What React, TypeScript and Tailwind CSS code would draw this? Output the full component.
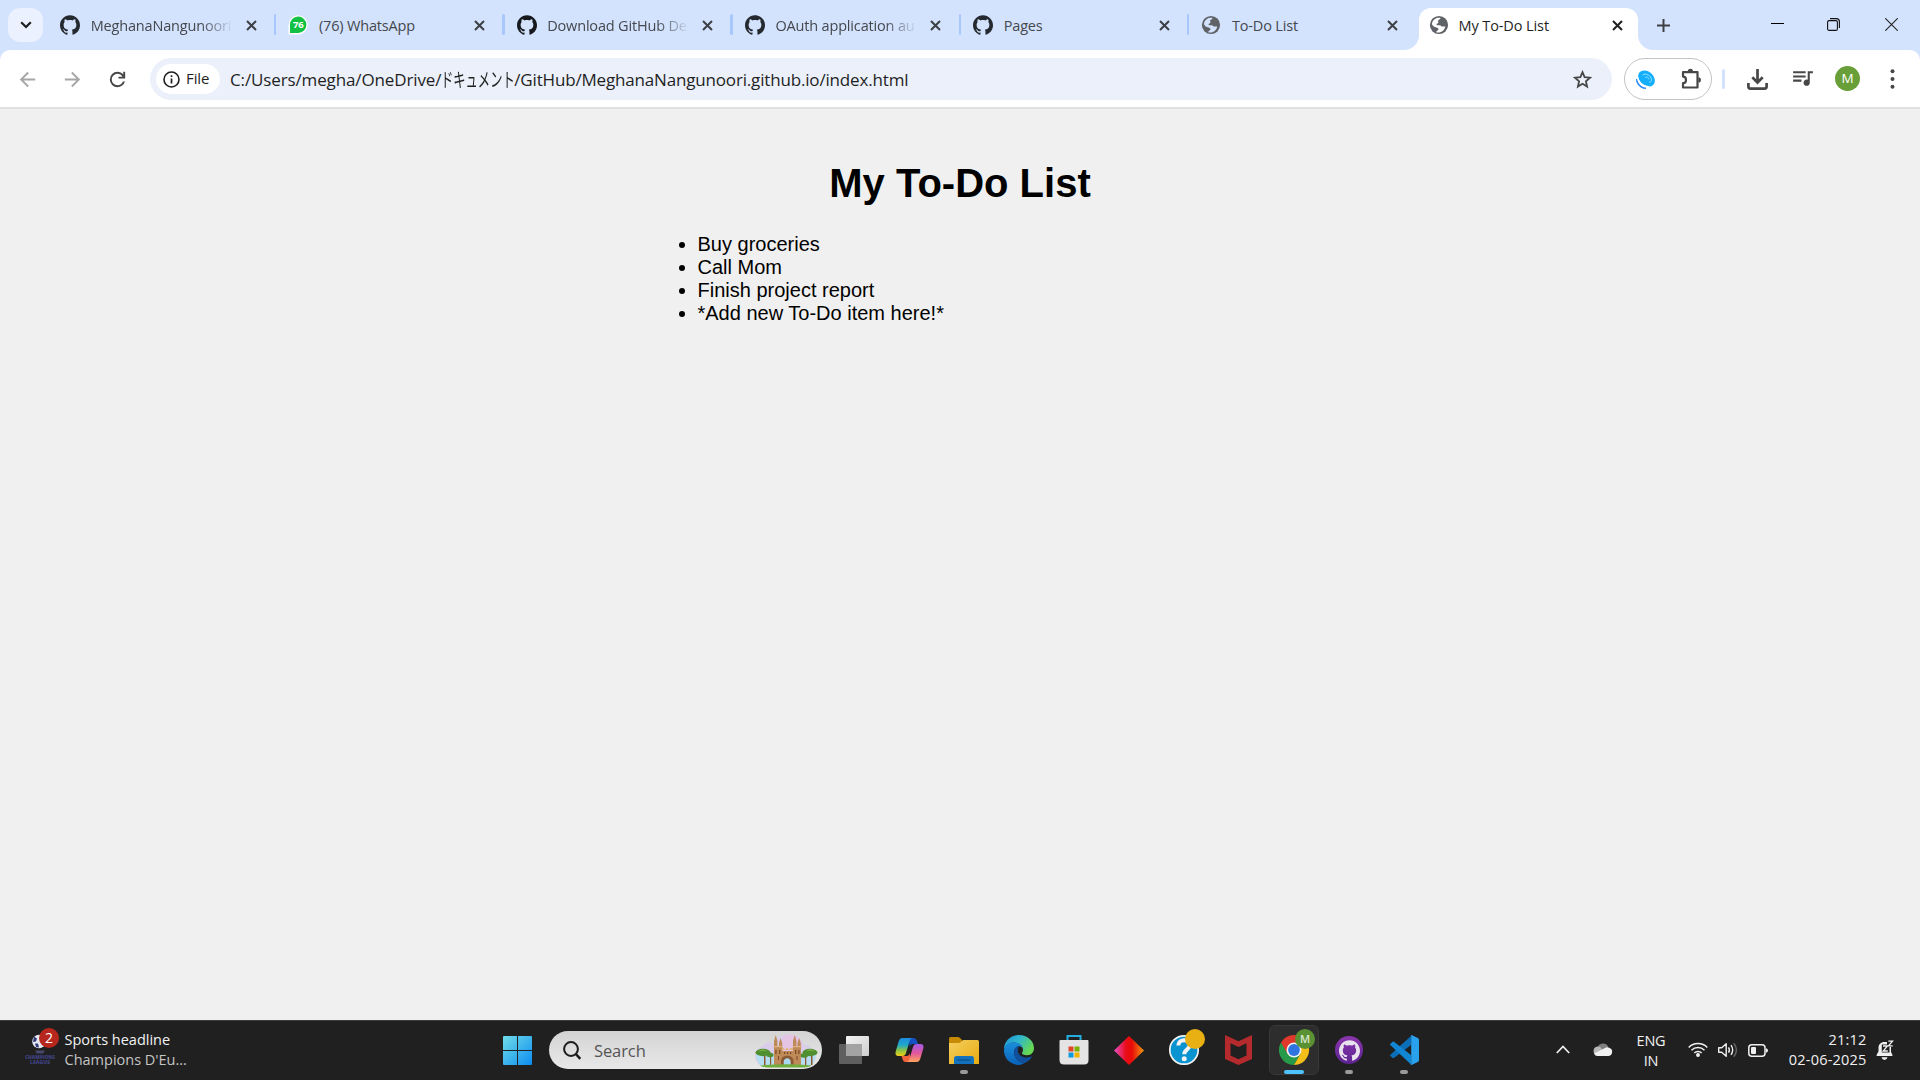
import type { ReactNode } from "react";
import { SiGithub } from "react-icons/si";
import { MdArrowBack, MdArrowForward, MdQueueMusic } from "react-icons/md";

function Globe() {
  return (
    <svg width="20" height="20" viewBox="0 0 20 20">
      <circle cx="10" cy="10" r="9.100" fill="#5f6368" />
      <path
        d="M2.900 9.200c.3-3.300 2.800-5.900 6.100-6.400 1.200-.1 2 .1 2.600.4-.5 1.300-2.100 1.200-2.500 2.300-.3 1 .6 1.300.3 2.200-.4.9-1.700.7-1.900 1.600-.1.800.9 1 2 1 1.500-.1 2.600.4 3.100 1.300h3.600c-.3 2.900-2.700 5.400-5.600 5.900-1.300.2-2.300.1-3.300-.2.100-1.200.8-1.700 1.600-2.100.9-.5.6-1.500-.2-2.100-1.400-1-3.900-.500-5.800-3.900z"
        fill="currentColor"
      />
    </svg>
  );
}

function WhatsApp() {
  return (
    <svg width="20" height="20" viewBox="0 0 20 20">
      <path d="M0.500 19.500V10A9.600 9.600 0 1 1 10.200 19.500z" fill="#fff" />
      <path d="M2 18V10A8.200 8.200 0 1 1 10.200 18z" fill="#12c143" />
      <text x="10.200" y="13.400" textAnchor="middle" fontFamily="Open Sans, sans-serif" fontWeight="700" fontSize="9.500" fill="#fff">
        76
      </text>
    </svg>
  );
}

function Cross({ color }: { color: string }) {
  return (
    <svg width="11" height="11" viewBox="0 0 11 11" fill="none" stroke={color} strokeWidth="2">
      <path d="M1 1l9 9M10 1l-9 9" />
    </svg>
  );
}

const tabs: { title: string; icon: ReactNode; fade?: boolean }[] = [
  { title: "MeghanaNangunoori", icon: <SiGithub size={20} color="#24292f" />, fade: true },
  { title: "(76) WhatsApp", icon: <WhatsApp /> },
  { title: "Download GitHub De", icon: <SiGithub size={20} color="#16181c" />, fade: true },
  { title: "OAuth application au", icon: <SiGithub size={20} color="#24292f" />, fade: true },
  { title: "Pages", icon: <SiGithub size={20} color="#24292f" /> },
  { title: "To-Do List", icon: <Globe /> },
];

function TabStrip() {
  return (
    <div className="flex h-[50px] shrink-0 bg-[#d3e2fd] text-[14.5px] tracking-[-0.17px]">
      <div className="ml-2 mt-2 flex h-[34px] w-[35px] shrink-0 items-center justify-center rounded-xl bg-[#ebf1fe]">
        <svg width="12" height="8" viewBox="0 0 12 8" fill="none" stroke="#1f1f1f" strokeWidth="2.200">
          <path d="M1.200 1.200L6 6l4.800-4.800" />
        </svg>
      </div>
      <div className="ml-[5.200px] flex shrink-0">
        {tabs.map((t, i) => (
          <div key={t.title} className="relative flex h-[50px] w-[228.25px] items-center pl-3 text-[#d3e2fd]">
            {t.icon}
            <span
              className={
                t.fade
                  ? "ml-[10.5px] w-[141px] whitespace-nowrap pt-0.5 text-[#45484d] [mask-image:linear-gradient(to_right,black_78%,transparent_101%)]"
                  : "ml-[10.5px] w-[141px] whitespace-nowrap pt-0.5 text-[#45484d]"
              }
            >
              {t.title}
            </span>
            <span className="ml-[14px]">
              <Cross color="#3c4043" />
            </span>
            {i < 5 && <i className="absolute right-0 top-[14px] h-[21px] w-[2.5px] rounded-full bg-[#a8c7fa]" />}
          </div>
        ))}
      </div>
      <div className="relative ml-[1.300px] mt-2 flex h-[42px] w-[219px] shrink-0 items-center rounded-t-xl bg-white pb-2 pl-[10px] text-white">
        <i className="absolute -left-[15px] bottom-0 size-[15px] bg-[radial-gradient(circle_at_0_0,transparent_14.5px,white_15.5px)]" />
        <i className="absolute -right-[15px] bottom-0 size-[15px] bg-[radial-gradient(circle_at_100%_0,transparent_14.5px,white_15.5px)]" />
        <Globe />
        <span className="ml-[9.5px] w-[141px] whitespace-nowrap pt-0.5 tracking-[-0.1px] text-[#1f1f1f]">My To-Do List</span>
        <span className="ml-[13px]">
          <Cross color="#1f1f1f" />
        </span>
      </div>
      <svg className="ml-[19px] mt-[19px] shrink-0" width="13" height="13" viewBox="0 0 13 13" stroke="#3c4043" strokeWidth="2">
        <path d="M6.500 0v13M0 6.500h13" />
      </svg>
      <div className="ml-auto mr-[22px] mt-[18px] flex shrink-0">
        <svg width="13" height="13" viewBox="0 0 13 13" stroke="#000" shapeRendering="crispEdges">
          <path d="M0 5.500h13" />
        </svg>
        <svg className="ml-[43px] mr-[45px]" width="13" height="13" viewBox="0 0 13 13" fill="none" stroke="#111" strokeWidth="1.100">
          <rect x=".6" y="2.600" width="9.800" height="9.800" rx="1.500" />
          <path d="M3 .6h6.400a3 3 0 0 1 3 3V10" />
        </svg>
        <svg width="13" height="13" viewBox="0 0 13 13" stroke="#222" strokeWidth="1.100">
          <path d="M.3.3l12.400 12.400M12.700.3L.3 12.700" />
        </svg>
      </div>
    </div>
  );
}

function Toolbar() {
  return (
    <div className="h-[59px] shrink-0 bg-[#d3e2fd]">
      <div className="flex h-full items-center rounded-t-[10px] border-b-2 border-[#e0e0e0] bg-white pt-px">
        <MdArrowBack size={23} color="#a6a6a6" className="ml-4 shrink-0" />
        <MdArrowForward size={23} color="#a6a6a6" className="ml-[22px] shrink-0" />
        <svg className="ml-[22px] shrink-0" width="23" height="23" viewBox="0 0 24 24" fill="#474747">
          <path d="M12 20q-3.350 0-5.675-2.325T4 12q0-3.350 2.325-5.675T12 4q1.725 0 3.300.712T18 6.750V4h2v7h-7V9h4.200q-.8-1.400-2.187-2.200T12 6Q9.500 6 7.750 7.750T6 12q0 2.500 1.750 4.250T12 18q1.925 0 3.475-1.100T17.650 14h2.100q-.7 2.650-2.850 4.325T12 20Z" />
        </svg>
        <div className="ml-[21px] flex h-[42px] w-[1462px] shrink-0 items-center rounded-full bg-[#ebf0fa] pl-1.5">
          <div className="flex h-[30px] w-16 shrink-0 items-center rounded-full bg-white pl-[7px]">
            <svg width="17" height="17" viewBox="0 0 17 17" fill="none" stroke="#1f1f1f" strokeWidth="1.600">
              <circle cx="8.500" cy="8.500" r="7.500" />
              <path d="M8.500 7.500v5M8.500 4.300v1.800" strokeWidth="1.700" />
            </svg>
            <span className="-mt-px ml-1.5 text-[15px] font-medium tracking-[-0.1px] text-[#1f1f1f]">File</span>
          </div>
          <div className="ml-[10px] flex items-center whitespace-nowrap pt-px text-[17px] leading-[24px] text-[#1f1f1f]">
            <span className="tracking-[-0.13px]">C:/Users/megha/OneDrive/</span>
            <span className="inline-block h-6 w-[73px]">
              <span className="-mt-px inline-block origin-left scale-x-[0.63] font-['Noto_Sans_CJK_JP',sans-serif] text-[19.500px]">ドキュメント</span>
            </span>
            <span className="tracking-[-0.17px]">/GitHub/MeghanaNangunoori.github.io/index.html</span>
          </div>
          <svg className="ml-auto mr-5" width="19" height="19" viewBox="0 0 19 19" fill="none" stroke="#474747" strokeWidth="1.800">
            <path d="M9.500 2.200l2.100 5 5.400.5-4.100 3.600 1.200 5.300-4.600-2.800-4.600 2.800 1.200-5.300L2 7.700l5.400-.5z" />
          </svg>
        </div>
        <div className="ml-3 flex h-[42px] w-[88px] shrink-0 items-center rounded-full border border-[#c4c4c4] pl-[11px]">
          <svg width="19" height="19" viewBox="0 0 19 19" fill="none">
            <ellipse cx="10.500" cy="8.500" rx="9.300" ry="7" transform="rotate(42 10.500 8.500)" fill="#15aefc" />
            <path d="M1.200 5.500c.2 5.500 5.300 11 11.800 11.300" stroke="#fff" strokeWidth="1.200" />
            <path d="M.6 9c.7 4.500 4.500 8.600 9.400 9.300-4.800.6-9.800-4-9.400-9.300z" fill="#1a7cf0" stroke="#2a8bff" />
            <path d="M6.500 5.500c1-2.500 6-1.500 8 1.500s1 5.500-1.500 5M9.300 7.300c1.300-1 3.500.3 3.600 2" stroke="#8fe3ff" strokeWidth="1" />
          </svg>
          <svg className="ml-[26px] mt-[-1px]" width="22" height="21" viewBox="0 0 22 21" fill="none" stroke="#474747" strokeWidth="2.200">
            <path d="M2 4.200h14.500v15.300H2v-4.300c1.700 0 3-1.400 3-3.300s-1.300-3.300-3-3.300z" strokeLinejoin="round" />
            <path d="M6.800 3.400a2.600 2.600 0 0 1 5.200 0zM17.300 9.300a2.600 2.600 0 0 1 0 5.200z" fill="#474747" stroke="none" />
          </svg>
        </div>
        <i className="ml-[10px] h-5 w-[2.5px] shrink-0 rounded-full bg-[#d3e2fd]" />
        <svg className="ml-[22.5px] shrink-0" width="21" height="21" viewBox="0 0 21 21" fill="none" stroke="#474747" strokeWidth="2.700">
          <path d="M10.500 0v13M5.300 8.300l5.200 5.200 5.200-5.200M1.400 14v3.600q0 2 2 2h14.200q2 0 2-2V14" />
        </svg>
        <MdQueueMusic size={25} color="#474747" className="-mt-[3px] ml-[22px] shrink-0" />
        <div className="-mt-px ml-[20px] flex size-[25px] shrink-0 items-center justify-center rounded-full bg-[#689f38] text-[13.500px] text-white">M</div>
        <svg className="-mt-px ml-[30px] shrink-0" width="5" height="20" viewBox="0 0 5 20" fill="#474747">
          <circle cx="2.500" cy="2.300" r="2" />
          <circle cx="2.500" cy="10" r="2" />
          <circle cx="2.500" cy="17.700" r="2" />
        </svg>
      </div>
    </div>
  );
}

function Castle() {
  return (
    <svg width="64" height="34" viewBox="0 0 64 34">
      <path d="M3 28C-1 22 2 13 9 12c2-5 8-4 10-2C23 3 30-1 38 1c7 1 10 5 11 9 6 0 11 5 12 11 1 7-4 12-9 12H12c-4 0-7-2-9-5z" fill="#d9cdea" />
      <path d="M30 2c8-4 18 1 18 9l-4 12H24z" fill="#e5c3e3" />
      <path d="M2 20h60c0 7-4 13-10 13H12C6 33 2 27 2 20z" fill="#b5dcf0" />
      <g fill="#8a5a30">
        <path d="M10 20h1.500v11H10zM16 20h1.200v11H16zM51 20h1.300v11H51zM57 20h1.500v11H57z" />
      </g>
      <g fill="#4f8f2f">
        <ellipse cx="9" cy="18.500" rx="7.500" ry="3.700" />
        <ellipse cx="16" cy="21" rx="3.500" ry="2.200" />
        <ellipse cx="56" cy="18.500" rx="7.500" ry="3.700" />
        <ellipse cx="50" cy="21.500" rx="4" ry="2.200" />
      </g>
      <path d="M4 17.500q4-3.500 9-.8-4 0-9 .8zM52 17.200q4-3.500 9-.3-5-.5-9 .3z" fill="#76b041" />
      <g fill="#bd8a58">
        <path d="M20 7l1.700-6L23.400 7v24H20zM25 9l1.600-5L28.200 9v8H25zM39 7l1.700-6L42.400 7v24H39zM43.500 9l1.600-5 1.700 5v22h-3.300z" />
        <path d="M20 12h8.200v5H39v-5h7.800v19H20z" />
      </g>
      <path d="M19.500 12h9v1.300h-9zM38.500 12h9v1.300h-9zM28 16v-2h2v1.300h2V14h2v1.300h2V14h3v2z" fill="#dfb482" />
      <path d="M21.300 16h1.300v4h-1.300zM25 16h1.300v4H25zM41 16h1.300v4H41zM44.300 16h1.200v4h-1.200zM30 18h1.200v2H30zM33 18h1.200v2H33zM36 18h1.200v2H36zM24 22h1v4h-1zM42.500 22h1v4h-1z" fill="#7c4a25" />
      <path d="M27 31v-4c0-7 12.500-7 12.500 0v4z" fill="#8b5a34" />
      <path d="M29.700 31v-3c0-5 7-5 7 0v3z" fill="#a9d7ee" />
      <path d="M6 31.500q26-2.500 52 0-4 2-8 2H14q-5 0-8-2z" fill="#6fae3e" />
    </svg>
  );
}

function Slot({ children, dot, active }: { children: ReactNode; dot?: boolean; active?: boolean }) {
  return (
    <div className="relative flex h-[60px] w-[55px] shrink-0 items-center justify-center">
      {active && <i className="absolute left-[2.500px] top-[5px] h-[50px] w-[50px] rounded-md border border-[#383838] bg-[#2d2d2d]" />}
      <div className="relative">{children}</div>
      {dot && <i className="absolute bottom-[6px] left-[23.500px] h-1 w-2 rounded-full bg-[#9a9a9a]" />}
      {active && <i className="absolute bottom-[6px] left-[17.500px] h-1 w-5 rounded-full bg-[#4cc2ff]" />}
    </div>
  );
}

function TaskIcons() {
  return (
    <>
      <Slot>
        <svg width="30" height="28" viewBox="0 0 30 28">
          <defs>
            <linearGradient id="tv" x1="0" y1="0" x2="1" y2="1">
              <stop offset="0" stopColor="#f2f2f2" />
              <stop offset="1" stopColor="#cfcfcf" />
            </linearGradient>
          </defs>
          <rect x="7" y="0" width="23" height="20" rx="1" fill="url(#tv)" />
          <rect x="0" y="8" width="23" height="20" rx="1" fill="#6b6b6b" fillOpacity=".85" />
          <path d="M7 8h16v12H7z" fill="#a3a3a3" />
        </svg>
      </Slot>
      <Slot>
        <svg width="29" height="26" viewBox="0 0 29 26">
          <defs>
            <linearGradient id="cp1" x1="0" y1="0" x2="0" y2="1">
              <stop offset="0" stopColor="#1b8de0" />
              <stop offset=".4" stopColor="#22a8c8" />
              <stop offset=".7" stopColor="#8fc540" />
              <stop offset="1" stopColor="#f2cf16" />
            </linearGradient>
            <linearGradient id="cp2" x1="0" y1="0" x2="0" y2="1">
              <stop offset="0" stopColor="#a45be8" />
              <stop offset=".5" stopColor="#e0569e" />
              <stop offset="1" stopColor="#ffa35c" />
            </linearGradient>
          </defs>
          <path d="M14 1h4.500c2 0 3 1.500 3.500 3l1 3h-5c-2 0-3 1-3.500 3z" fill="#1551c4" />
          <path d="M15 25h-4.500C8.500 25 8 23.500 7.500 22l-1-3h5c2 0 3-1 3.500-3z" fill="#f0643c" />
          <path d="M7.500 1H18c-2 0-3 1.500-3.500 3.200L11 16c-.6 2-1.700 3-3.700 3H3.500C.8 19 0 17 .7 14.500L3.800 4C4.500 2 5.500 1 7.500 1z" fill="url(#cp1)" />
          <path d="M21.500 25H11c2 0 3-1.500 3.500-3.200L18 10c.6-2 1.700-3 3.700-3h3.800c2.700 0 3.500 2 2.800 4.500L25.200 22c-.7 2-1.700 3-3.700 3z" fill="url(#cp2)" />
        </svg>
      </Slot>
      <Slot dot>
        <svg width="30" height="27" viewBox="0 0 30 27">
          <defs>
            <linearGradient id="fe" x1="0" y1="0" x2="1" y2="1">
              <stop offset="0" stopColor="#f5cf60" />
              <stop offset="1" stopColor="#e8ab10" />
            </linearGradient>
          </defs>
          <path d="M0 1.500Q0 0 1.500 0H9q1 0 2 1l2 2v3H0z" fill="#c68a06" />
          <path d="M0 6h9.500q1.500 0 2.500-1l2-2h14.500Q30 3 30 4.500V27H0z" fill="url(#fe)" />
          <path d="M5 27v-5.500Q5 19 7.500 19h15q2.500 0 2.500 2.500V27z" fill="#1272bd" />
          <path d="M8.500 23h13" stroke="#0a4c86" strokeWidth="1.200" />
        </svg>
      </Slot>
      <Slot>
        <svg width="30" height="30" viewBox="0 0 30 30">
          <defs>
            <linearGradient id="eg1" x1="0" y1="0" x2="1" y2=".5">
              <stop offset="0" stopColor="#1c8fd8" />
              <stop offset=".5" stopColor="#2fb7cc" />
              <stop offset="1" stopColor="#66d853" />
            </linearGradient>
            <linearGradient id="eg2" x1="0" y1="0" x2="0" y2="1">
              <stop offset="0" stopColor="#1a8fdc" />
              <stop offset="1" stopColor="#0a62b8" />
            </linearGradient>
          </defs>
          <path d="M0 14.500C0 6 6.700 0 15 0s15 6 15 13.200c0 4.200-3 7-7 7-3.500 0-5.500-1.200-5-2.200.6-1 1-1.800 1-3.200C19 10.500 14.500 7.500 10 7.500S1.500 10 0 14.500z" fill="url(#eg1)" />
          <path d="M0 15C.5 10 5 7.300 10 7.300c5 0 9 3.200 9 7.500 0-2.300-2-3.600-3.800-3.600-3.600 0-6 4-4.800 8.500C11.800 25 16.500 28 21 27.600 19 29.200 17 30 15 30 6.500 30-.3 23.500 0 15z" fill="url(#eg2)" />
          <path d="M15.200 11.200c-3.600 0-6 4-4.800 8.500C11.800 25 16.500 28.300 21 28c3-1.200 5.300-3.500 6.600-5.700.4-.7-.2-1-.7-.8-5 2.300-12 .5-13-5-.3-2 0-4 1.300-5.300z" fill="#10509c" />
        </svg>
      </Slot>
      <Slot>
        <svg width="30" height="30" viewBox="0 0 30 30">
          <path d="M8.500 6V1h13v5" fill="none" stroke="#24aee0" strokeWidth="2" />
          <path d="M.5 6Q.5 5 1.500 5h27q1 0 1 1v19q0 4.500-4.500 4.500H5Q.5 29.500.5 25z" fill="#e4e4e4" />
          <path d="M9.500 11.500h5v5h-5z" fill="#e2472a" />
          <path d="M15.500 11.500h5v5h-5z" fill="#7db002" />
          <path d="M9.500 17.500h5v5h-5z" fill="#0a9be0" />
          <path d="M15.500 17.500h5v5h-5z" fill="#f4b202" />
        </svg>
      </Slot>
      <Slot>
        <svg width="30" height="29" viewBox="0 0 30 29">
          <defs>
            <linearGradient id="dm">
              <stop offset="0" stopColor="#ea4fc8" />
              <stop offset=".4" stopColor="#e80c18" />
              <stop offset=".6" stopColor="#e80c08" />
              <stop offset="1" stopColor="#f29a10" />
            </linearGradient>
          </defs>
          <path d="M15 0l15 14.500L15 29 0 14.500z" fill="url(#dm)" />
        </svg>
      </Slot>
      <Slot>
        <svg width="36" height="36" viewBox="0 0 36 36" className="ml-[6px] mt-[-6px]">
          <circle cx="15" cy="21" r="14.200" fill="#0a93d1" stroke="#f2f2f2" strokeWidth="1.700" />
          <path d="M9.300 16.500C9.300 9.500 20.800 9.500 20.800 16c0 4.500-5.600 4.500-5.600 9.300" fill="none" stroke="#f2f2f2" strokeWidth="4" />
          <circle cx="15.200" cy="29.700" r="2.500" fill="#f2f2f2" />
          <circle cx="26" cy="10" r="10" fill="#e8b012" />
        </svg>
      </Slot>
      <Slot>
        <svg width="27" height="30" viewBox="0 0 27 30" className="-ml-px">
          <path d="M0 0l13.500 6.300L27 0v24l-13.500 6L0 24zM5.500 8.300v12.200l8 3.700 8-3.700V8.300l-8 3.700z" fill="#b52a2c" fillRule="evenodd" />
        </svg>
      </Slot>
      <Slot active>
        <svg width="36" height="36" viewBox="0 0 36 36" className="ml-[6px] mt-[-6px]">
          <path d="M15 21l6 4.500L15 36A15 15 0 0 1 2 13.500z" fill="#269a48" />
          <path d="M15 13.500h13A15 15 0 0 1 15 36l6.500-11.200z" fill="#f4bf18" />
          <path d="M2 13.500A15 15 0 0 1 28 13.500H15L8.500 24.800z" fill="#e0392c" />
          <circle cx="15" cy="21" r="7.500" fill="#f3f3f3" />
          <circle cx="15" cy="21" r="5.900" fill="#2f74e0" />
          <circle cx="26" cy="10" r="10" fill="#5a9132" />
          <text x="26" y="14" textAnchor="middle" fontFamily="Open Sans, sans-serif" fontWeight="600" fontSize="11" fill="#dbe8d0">
            M
          </text>
        </svg>
      </Slot>
      <Slot dot>
        <div className="flex size-7 items-center justify-center rounded-full bg-gradient-to-b from-[#8c35ae] to-[#5c2490]">
          <SiGithub size={21} color="#e8e2ee" />
        </div>
      </Slot>
      <Slot dot>
        <svg width="30" height="30" viewBox="0 0 30 30" className="-ml-px">
          <path d="M.8 20.200l2.500 2.500q1 .8 2 0L22 10V1z" fill="#0a6fb8" />
          <path d="M.8 9.500L3.300 7q1-.8 2 0L22 20v9.500z" fill="#1187d3" />
          <path d="M21 .5q.9-.8 2-.3l5.800 2.800Q30 3.600 30 5v20q0 1.400-1.200 2l-5.800 2.800q-1.200.5-2-.3 1.200.7 1.200-1V1.500q0-1.700-1.200-1z" fill="#2aa1ec" />
        </svg>
      </Slot>
    </>
  );
}

function Tray() {
  return (
    <div className="ml-[124px] flex h-full items-center text-[14.5px] leading-5 text-[#f0f0f0]">
      <svg className="-mt-px shrink-0" width="14" height="9" viewBox="0 0 14 9" fill="none" stroke="#f0f0f0" strokeWidth="1.700">
        <path d="M.8 8L7 1.500 13.200 8" />
      </svg>
      <svg className="-mt-px ml-[23px] shrink-0" width="20" height="13" viewBox="0 0 20 13">
        <path d="M4.500 5A5.700 5.700 0 0 1 15.500 4.300l-7 4z" fill="#7f7f7f" />
        <path d="M4.500 3.500A4.600 4.600 0 0 1 9 6.500l3 3-8 3A4.600 4.600 0 0 1 4.500 3.500z" fill="#b9b9b9" />
        <path d="M1 10.500L12 5q2-1.500 4.200-.3A4.300 4.300 0 0 1 15.700 13H4.500Q2 13 1 10.500z" fill="#f1f1f1" />
      </svg>
      <div className="ml-[23px] mt-px w-[31px] shrink-0 text-center tracking-[-0.2px]">
        <p>ENG</p>
        <p>IN</p>
      </div>
      <svg className="-mt-px ml-[21px] shrink-0" width="20" height="15" viewBox="0 0 20 15" fill="none" stroke="#f0f0f0" strokeWidth="1.500">
        <path d="M.7 5.500a13 13 0 0 1 18.600 0M3.500 8.300a9.200 9.200 0 0 1 13 0M6.300 11a5.200 5.200 0 0 1 7.400 0" />
        <circle cx="10" cy="13" r="1.200" fill="#f0f0f0" />
      </svg>
      <svg className="ml-[10px] shrink-0" width="20" height="16" viewBox="0 0 20 16" fill="none" stroke="#f0f0f0" strokeWidth="1.400">
        <path d="M.7 5.700v4.600h3l4.500 4V1.700l-4.500 4z" strokeLinejoin="round" />
        <path d="M10.500 5.300q1.800 2.700 0 5.400M13 3.200q3.400 4.800 0 9.600" />
        <path d="M15.700 1.300q5.500 6.700 0 13.400" stroke="#666" />
      </svg>
      <svg className="ml-[10px] shrink-0" width="20" height="13" viewBox="0 0 20 13">
        <rect x=".8" y=".8" width="16.200" height="11.400" rx="3" fill="none" stroke="#f0f0f0" strokeWidth="1.500" />
        <rect x="3" y="3" width="5" height="7" rx="1" fill="#f0f0f0" />
        <path d="M18 4.300q2 .4 2 2.200t-2 2.200z" fill="#f0f0f0" />
      </svg>
      <div className="ml-5 w-[79px] shrink-0 whitespace-nowrap text-right tracking-[0.2px]">
        <p>21:12</p>
        <p>02-06-2025</p>
      </div>
      <svg className="ml-[9px] shrink-0" width="18" height="20" viewBox="0 0 18 20">
        <path d="M8.500 2C4.800 2 2.500 4.500 2.500 8v3.500L.5 15q-.3 1 .7 1h14.600q1 0 .7-1l-1.500-3V2z" fill="#f0f0f0" />
        <path d="M5.500 17.300h6Q11 20 8.500 20t-3-2.700z" fill="#f0f0f0" />
        <path d="M11 0h7v7h-4.500v5.500H5.800v-8H11z" fill="#202020" />
        <path d="M7 6h4.500l-4.300 5h4.600M12.300 1.200h4.200l-4 4.600h4.200" fill="none" stroke="#f0f0f0" strokeWidth="1.300" />
      </svg>
    </div>
  );
}

function Taskbar() {
  return (
    <div className="flex h-[60px] shrink-0 items-center bg-[#202020] shadow-[inset_0_1px_0_#3a3d3d]">
      <div className="flex w-[503px] shrink-0 items-center pl-[25px]">
        <div className="relative h-[38px] w-[35px] shrink-0">
          <svg className="absolute left-0 top-[2px]" width="30" height="33" viewBox="0 0 30 33">
            <circle cx="14" cy="8.500" r="6.800" fill="#e6e9f2" />
            <path d="M9 3.500l3 2-1 3-3 .5zM10 10.500l3 0 1 4-3-.5zM15 5.500l4-1 2 4-3 3z" fill="#303878" />
            <path d="M10 17.500h10l-2 3h-6z" fill="#45476c" />
            <text x="0" y="26" textLength="30" lengthAdjust="spacingAndGlyphs" fontFamily="Open Sans, sans-serif" fontWeight="800" fontSize="5.500" fill="#3f4180">
              CHAMPIONS
            </text>
            <text x="5" y="30.500" textLength="20" lengthAdjust="spacingAndGlyphs" fontFamily="Open Sans, sans-serif" fontWeight="800" fontSize="5.500" fill="#3f4180">
              LEAGUE
            </text>
          </svg>
          <span className="absolute left-[14px] top-[-3px] flex size-5 items-center justify-center rounded-full bg-[#b7271d] text-[14px] leading-none text-white">2</span>
        </div>
        <div className="ml-[4.500px] whitespace-nowrap text-[14.5px] leading-5">
          <p className="text-[#f2f2f2]">Sports headline</p>
          <p className="text-[#c4c4c4]">Champions D'Eu...</p>
        </div>
      </div>
      <svg className="shrink-0" width="29" height="29" viewBox="0 0 29 29">
        <defs>
          <linearGradient id="win" x1="0" y1="0" x2="1" y2="1">
            <stop offset="0" stopColor="#6fdde8" />
            <stop offset="1" stopColor="#0d8cf0" />
          </linearGradient>
        </defs>
        <path d="M1 0h13v14H0V1q0-1 1-1zM15 0h13q1 0 1 1v13H15zM0 15h14v14H1q-1 0-1-1zM15 15h14v13q0 1-1 1H15z" fill="url(#win)" />
      </svg>
      <div className="ml-[17px] flex h-[38px] w-[273px] shrink-0 items-center rounded-full bg-gradient-to-b from-[#d4d4d4] to-[#e8e8e8] pl-[14px]">
        <svg width="18" height="19" viewBox="0 0 18 19" fill="none" stroke="#1c1c1c" strokeWidth="2">
          <circle cx="8" cy="8" r="6.900" />
          <path d="M12.800 13l4.500 5" strokeWidth="2.600" />
        </svg>
        <span className="ml-[13px] pt-0.5 text-[16.500px] tracking-[-0.1px] text-[#555]">Search</span>
        <span className="ml-auto mr-1 mt-0.5">
          <Castle />
        </span>
      </div>
      <div className="ml-[4.500px] flex shrink-0">
        <TaskIcons />
      </div>
      <Tray />
    </div>
  );
}

export default function App() {
  return (
    <div className="flex h-[1080px] w-[1920px] flex-col overflow-hidden bg-[#f0f0f0] font-['Open_Sans','Noto_Sans_CJK_JP',sans-serif]">
      <TabStrip />
      <Toolbar />
      <main className="flex-1 pt-[52px] font-['Liberation_Sans',Arial,sans-serif] text-black">
        <h1 className="text-center text-[40px] font-bold leading-[45px]">My To-Do List</h1>
        <ul className="mx-auto mt-[26.500px] w-[625px] list-disc pl-[50px] text-[20px] leading-[23px]">
          <li>Buy groceries</li>
          <li>Call Mom</li>
          <li>Finish project report</li>
          <li>*Add new To-Do item here!*</li>
        </ul>
      </main>
      <Taskbar />
    </div>
  );
}
